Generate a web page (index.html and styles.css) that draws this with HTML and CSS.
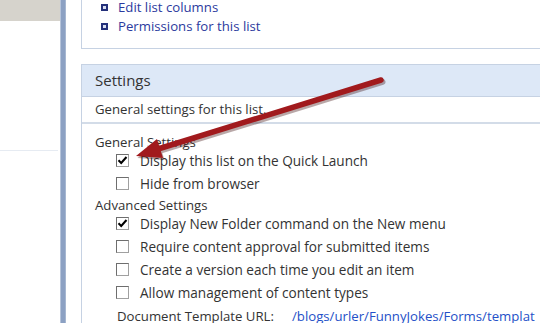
FILE: index.html
```html
<!DOCTYPE html>
<html lang="en">
<head>
    <meta charset="UTF-8">
    <title>List Settings</title>
    <link rel="stylesheet" href="styles.css">
</head>
<body>

<div class="page">
    <div class="left-nav">
        <div class="nav-band"></div>
        <div class="nav-rule"></div>
    </div>
    <div class="splitter"></div>

    <div class="main">
        <div class="links-box">
            <ul class="link-list">
                <li><span class="bullet"></span><a href="#">Edit list columns</a></li>
                <li><span class="bullet"></span><a href="#">Permissions for this list</a></li>
            </ul>
        </div>

        <div class="settings-box">
            <div class="settings-header">Settings</div>
            <div class="settings-desc">General settings for this list.</div>
            <div class="settings-body">
                <div class="group-title">General Settings</div>
                <div class="option">
                    <span class="checkbox checked"><svg width="13" height="13" viewBox="0 0 13 13"><path d="M2.5 6.2 L5.2 9 L10.5 3" fill="none" stroke="#000" stroke-width="2"/></svg></span>
                    Display this list on the Quick Launch
                </div>
                <div class="option">
                    <span class="checkbox"></span>
                    Hide from browser
                </div>

                <div class="group-title">Advanced Settings</div>
                <div class="option">
                    <span class="checkbox checked"><svg width="13" height="13" viewBox="0 0 13 13"><path d="M2.5 6.2 L5.2 9 L10.5 3" fill="none" stroke="#000" stroke-width="2"/></svg></span>
                    Display New Folder command on the New menu
                </div>
                <div class="option">
                    <span class="checkbox"></span>
                    Require content approval for submitted items
                </div>
                <div class="option">
                    <span class="checkbox"></span>
                    Create a version each time you edit an item
                </div>
                <div class="option">
                    <span class="checkbox"></span>
                    Allow management of content types
                </div>
                <div class="option template-row">
                    <span class="template-label">Document Template URL:</span>
                    <a class="template-url" href="#">/blogs/urler/FunnyJokes/Forms/templat</a>
                </div>
            </div>
        </div>
    </div>
</div>

<!-- callout arrow drawn over the screenshot -->
<svg class="callout" width="540" height="323" viewBox="0 0 540 323">
    <g transform="translate(1.5,2)" opacity="0.35">
        <line x1="381" y1="80" x2="158" y2="149" stroke="#3a0a0a" stroke-width="6" stroke-linecap="round"/>
        <polygon points="136,156 163,158 157,139" fill="#3a0a0a"/>
    </g>
    <line x1="381" y1="80" x2="158" y2="149" stroke="#a11a1d" stroke-width="5.5" stroke-linecap="round"/>
    <polygon points="136,156 163,158 157,139" fill="#a11a1d"/>
</svg>

</body>
</html>
```

FILE: styles.css
```css
body {
    margin: 0;
    font-family: 'Open Sans', 'Noto Sans', sans-serif;
    font-size: 13.2px;
    color: #333;
    background: #fff;
    overflow: hidden;
    width: 540px;
    height: 323px;
    position: relative;
}

.page {
    display: flex;
    height: 323px;
}

.left-nav {
    width: 60px;
    flex-shrink: 0;
}
.nav-band {
    height: 21px;
    background: #d6d3cc;
}
.nav-rule {
    margin-top: 129px;
    height: 1px;
    width: 58px;
    background: #e6ebf2;
}

.splitter {
    width: 4px;
    flex-shrink: 0;
    background: #8ca1c3;
    border-left: 1px solid #b6c4da;
    border-right: 1px solid #a6b7d1;
}

.main {
    flex: 1;
    padding-left: 15px;
    min-width: 0;
}

.links-box {
    width: 600px;
    padding-bottom: 14px;
    border: 1px solid #c6d2e3;
    border-top: none;
}
.link-list {
    list-style: none;
    margin: 0;
    padding: 0 0 0 19px;
    display: flex;
    flex-direction: column;
    gap: 4px;
}
.link-list li {
    height: 15px;
    line-height: 15px;
    display: flex;
    align-items: center;
}
.link-list a {
    color: #2b3a9e;
    text-decoration: none;
    font-size: 13.2px;
}
.bullet {
    width: 3px;
    height: 3px;
    border: 2px solid #24307a;
    background: #d8def0;
    margin-right: 10px;
}

.settings-box {
    width: 600px;
    margin-top: 15px;
    border: 1px solid #c6d2e3;
    border-right: none;
}
.settings-header {
    height: 31px;
    line-height: 31px;
    padding-left: 13px;
    background: #dde8f7;
    border-bottom: 1px solid #c6d2e3;
    font-size: 15px;
    color: #333;
}
.settings-desc {
    height: 25px;
    line-height: 24px;
    padding-left: 13px;
    border-bottom: 2px solid #d3dce8;
}
.settings-body {
    padding: 8px 0 0 13px;
}

.group-title {
    margin-top: 4px;
    height: 13px;
    line-height: 13px;
}

.option {
    height: 23px;
    display: flex;
    align-items: center;
    padding-left: 21px;
    white-space: nowrap;
    font-size: 13.6px;
}
.checkbox {
    width: 11px;
    height: 11px;
    border: 1px solid #6e6e6e;
    border-right-color: #a0a0a0;
    border-bottom-color: #a0a0a0;
    background: #fff;
    margin-right: 11px;
    position: relative;
    flex-shrink: 0;
}
.checkbox svg {
    position: absolute;
    left: -1px;
    top: -1px;
}

.template-row {
    padding-left: 22px;
    font-size: 13.2px;
}
.template-label {
    width: 175px;
}
.template-url {
    color: #2450c8;
    text-decoration: none;
}

.callout {
    position: absolute;
    left: 0;
    top: 0;
    pointer-events: none;
}
```
